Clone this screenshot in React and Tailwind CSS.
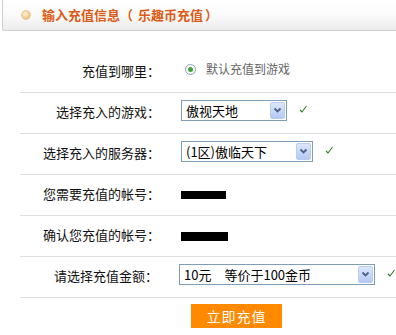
import React from 'react';

const font = { fontFamily: '"Noto Sans CJK SC", "Noto Sans", sans-serif' };

const Check = () => (
  <svg width="9" height="8" viewBox="0 0 9 8" className="ml-[12px] -mt-[2px]">
    <path d="M1 5 L3 7 L7.5 1" fill="none" stroke="#2f7a25" strokeWidth="1.1" />
  </svg>
);

const FakeSelect = ({ value, width }) => (
  <div
    className="flex items-center h-[21px] border border-[#7f9db9] bg-white pl-[4px] pr-[1px] text-[13px] text-black leading-none"
    style={{ width }}
  >
    <span className="flex-1 whitespace-pre">{value}</span>
    <div className="w-[15px] h-[17px] rounded-[2px] border border-[#b9cdf3] bg-gradient-to-b from-[#dbe6fb] to-[#b4c9f3] flex items-center justify-center">
      <svg width="9" height="7" viewBox="0 0 9 7">
        <path d="M1.5 1.5 L4.5 4.5 L7.5 1.5" fill="none" stroke="#4d6185" strokeWidth="1.8" />
      </svg>
    </div>
  </div>
);

const Row = ({ label, children }) => (
  <div className="flex items-center h-[41px] border-b border-[#dddddd]">
    <div className="w-[140px] text-right text-[13px] text-[#111] pb-[2px]">{label}</div>
    <div className="flex items-center pl-[21px] pb-[6px]">{children}</div>
  </div>
);

export default function App() {
  return (
    <div className="w-[396px] h-[335px] bg-white overflow-hidden" style={font}>
      {/* title bar */}
      <div className="ml-[2px] h-[31px] border-b border-l border-[#cfcfcf] rounded-bl-[2px] bg-gradient-to-b from-white via-[#fafafa] to-[#ececec] flex items-center">
        <div className="ml-[18px] w-[10px] h-[10px] rounded-full border border-[#e8c99a] bg-[radial-gradient(circle_at_40%_35%,#fff3dc,#f2c27c_70%,#e4a85a)]" />
        <div className="ml-[11px] flex text-[13px] font-bold text-[#dd5a14]">
          <span>输入充值信息</span>
          <span>（</span>
          <span className="ml-[5px]">乐趣币充值</span>
          <span className="ml-[2px]">）</span>
        </div>
      </div>

      {/* form */}
      <div className="mt-[21px] ml-[20px]">
        <Row label="充值到哪里：">
          <div className="flex items-center ml-[4px]">
            <div className="w-[11px] h-[11px] rounded-full border border-[#8aa0b8] bg-white flex items-center justify-center">
              <div className="w-[5px] h-[5px] rounded-full bg-[#3fa33a]" />
            </div>
            <span className="ml-[10px] text-[12px] text-[#666]">默认充值到游戏</span>
          </div>
        </Row>
        <Row label="选择充入的游戏：">
          <FakeSelect value="傲视天地" width="106px" />
          <Check />
        </Row>
        <Row label="选择充入的服务器：">
          <FakeSelect value="(1区)傲临天下" width="132px" />
          <Check />
        </Row>
        <Row label="您需要充值的帐号：">
          <div className="mt-[6px] w-[45px] h-[8px] bg-black" />
        </Row>
        <Row label="确认您充值的帐号：">
          <div className="mt-[6px] w-[47px] h-[9px] bg-black" />
        </Row>
        <Row label="请选择充值金额：">
          <FakeSelect value="10元　等价于100金币" width="196px" />
          <Check />
        </Row>
        <div className="pl-[171px] pt-[5px]">
          <button className="w-[91px] h-[24px] bg-[#ff8a00] text-white text-[14px] tracking-[1px] leading-none">
            立即充值
          </button>
        </div>
      </div>
    </div>
  );
}
